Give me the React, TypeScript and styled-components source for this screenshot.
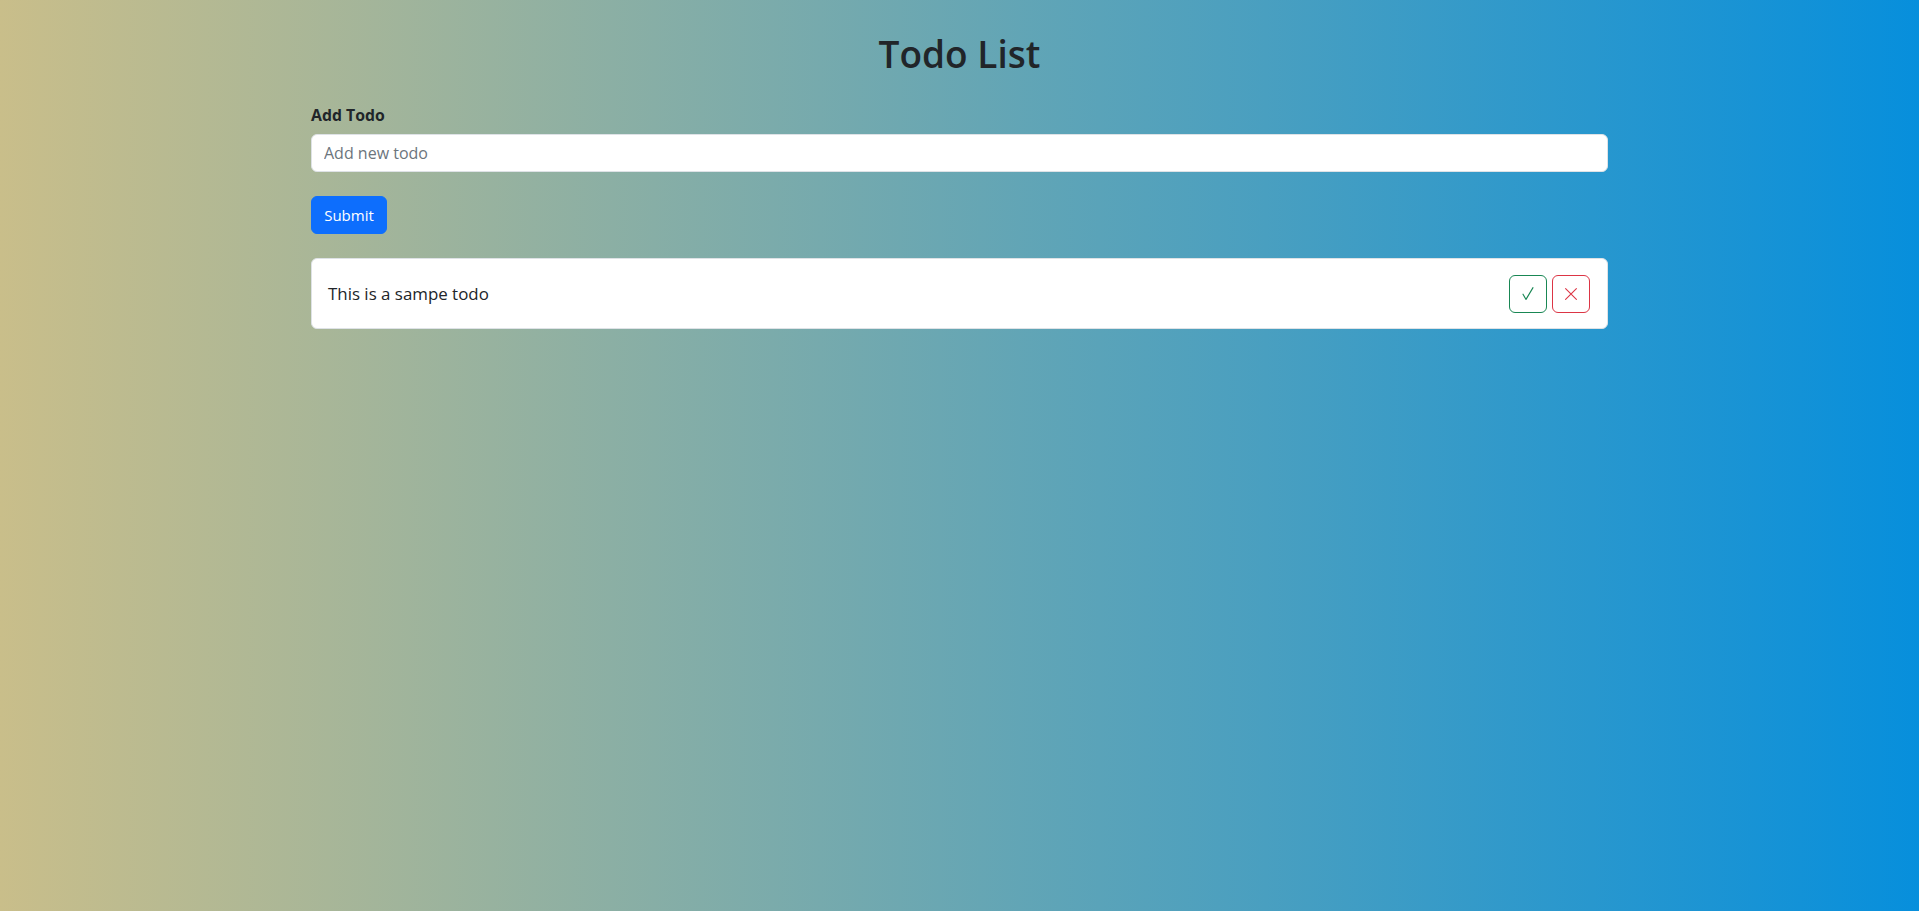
import React from "react";
import styled, { createGlobalStyle } from "styled-components";

const GlobalStyle = createGlobalStyle`
  html, body {
    margin: 0;
    padding: 0;
  }
  body {
    font-family: "Open Sans", "Noto Sans", "Liberation Sans", sans-serif;
    color: #212529;
  }
  * { box-sizing: border-box; }
`;

const Page = styled.div`
  min-height: 100vh;
  background: linear-gradient(90deg, #c9be8a 0%, #078fdc 100%);
  padding-top: 30px;
`;

const Container = styled.main`
  width: 1297px;
  margin: 0 auto;
  display: flex;
  flex-direction: column;
`;

const Title = styled.h1`
  margin: 0 0 25px;
  text-align: center;
  font-size: 37px;
  font-weight: 600;
  line-height: 48px;
  color: #212529;
`;

const Form = styled.form`
  display: flex;
  flex-direction: column;
  align-items: flex-start;
`;

const Label = styled.label`
  font-size: 15.8px;
  font-weight: 700;
  line-height: 24px;
  margin-bottom: 7px;
`;

const Input = styled.input`
  width: 100%;
  height: 38px;
  padding: 6px 12px;
  font-family: inherit;
  font-size: 16px;
  color: #212529;
  background: #fff;
  border: 1px solid #dee2e6;
  border-radius: 6px;
  outline: none;
  margin-bottom: 24px;
  &::placeholder {
    color: #6c757d;
  }
`;

const SubmitButton = styled.button`
  height: 38px;
  width: 76px;
  padding: 0 12px;
  font-family: inherit;
  font-size: 15px;
  color: #fff;
  background: #0d6efd;
  border: 1px solid #0d6efd;
  border-radius: 6px;
  cursor: pointer;
`;

const List = styled.ul`
  list-style: none;
  margin: 24px 0 0;
  padding: 0;
`;

const Card = styled.li`
  display: flex;
  align-items: center;
  justify-content: space-between;
  background: #fff;
  border: 1px solid #dee2e6;
  border-radius: 6px;
  padding: 16px 17px 16px 16px;
  height: 71px;
`;

const TodoText = styled.span`
  font-size: 16.9px;
  line-height: 24px;
  color: #212529;
`;

const Actions = styled.div`
  display: flex;
  gap: 5px;
`;

const IconButton = styled.button<{ $tone: string }>`
  width: 38px;
  height: 38px;
  padding: 0;
  display: flex;
  align-items: center;
  justify-content: center;
  background: transparent;
  border: 1px solid ${(p) => p.$tone};
  color: ${(p) => p.$tone};
  border-radius: 6px;
  cursor: pointer;
  svg {
    display: block;
  }
`;

const CheckIcon = () => (
  <svg width="12" height="13" viewBox="0 0 12 13" fill="none">
    <path d="M1 7.2 L4 12.4 L11 0.6" stroke="currentColor" strokeWidth="1.1" strokeLinecap="round" strokeLinejoin="round" />
  </svg>
);

const CrossIcon = () => (
  <svg width="12" height="12" viewBox="0 0 12 12" fill="none">
    <path d="M0.6 0.6 L11.4 11.4 M11.4 0.6 L0.6 11.4" stroke="currentColor" strokeWidth="1.1" strokeLinecap="round" />
  </svg>
);

export default function App() {
  return (
    <>
      <GlobalStyle />
      <Page>
        <Container>
          <Title>Todo List</Title>
          <Form onSubmit={(e) => e.preventDefault()}>
            <Label htmlFor="todo">Add Todo</Label>
            <Input id="todo" placeholder="Add new todo" />
            <SubmitButton type="submit">Submit</SubmitButton>
          </Form>
          <List>
            <Card>
              <TodoText>This is a sampe todo</TodoText>
              <Actions>
                <IconButton $tone="#198754" aria-label="Complete">
                  <CheckIcon />
                </IconButton>
                <IconButton $tone="#dc3545" aria-label="Delete">
                  <CrossIcon />
                </IconButton>
              </Actions>
            </Card>
          </List>
        </Container>
      </Page>
    </>
  );
}
